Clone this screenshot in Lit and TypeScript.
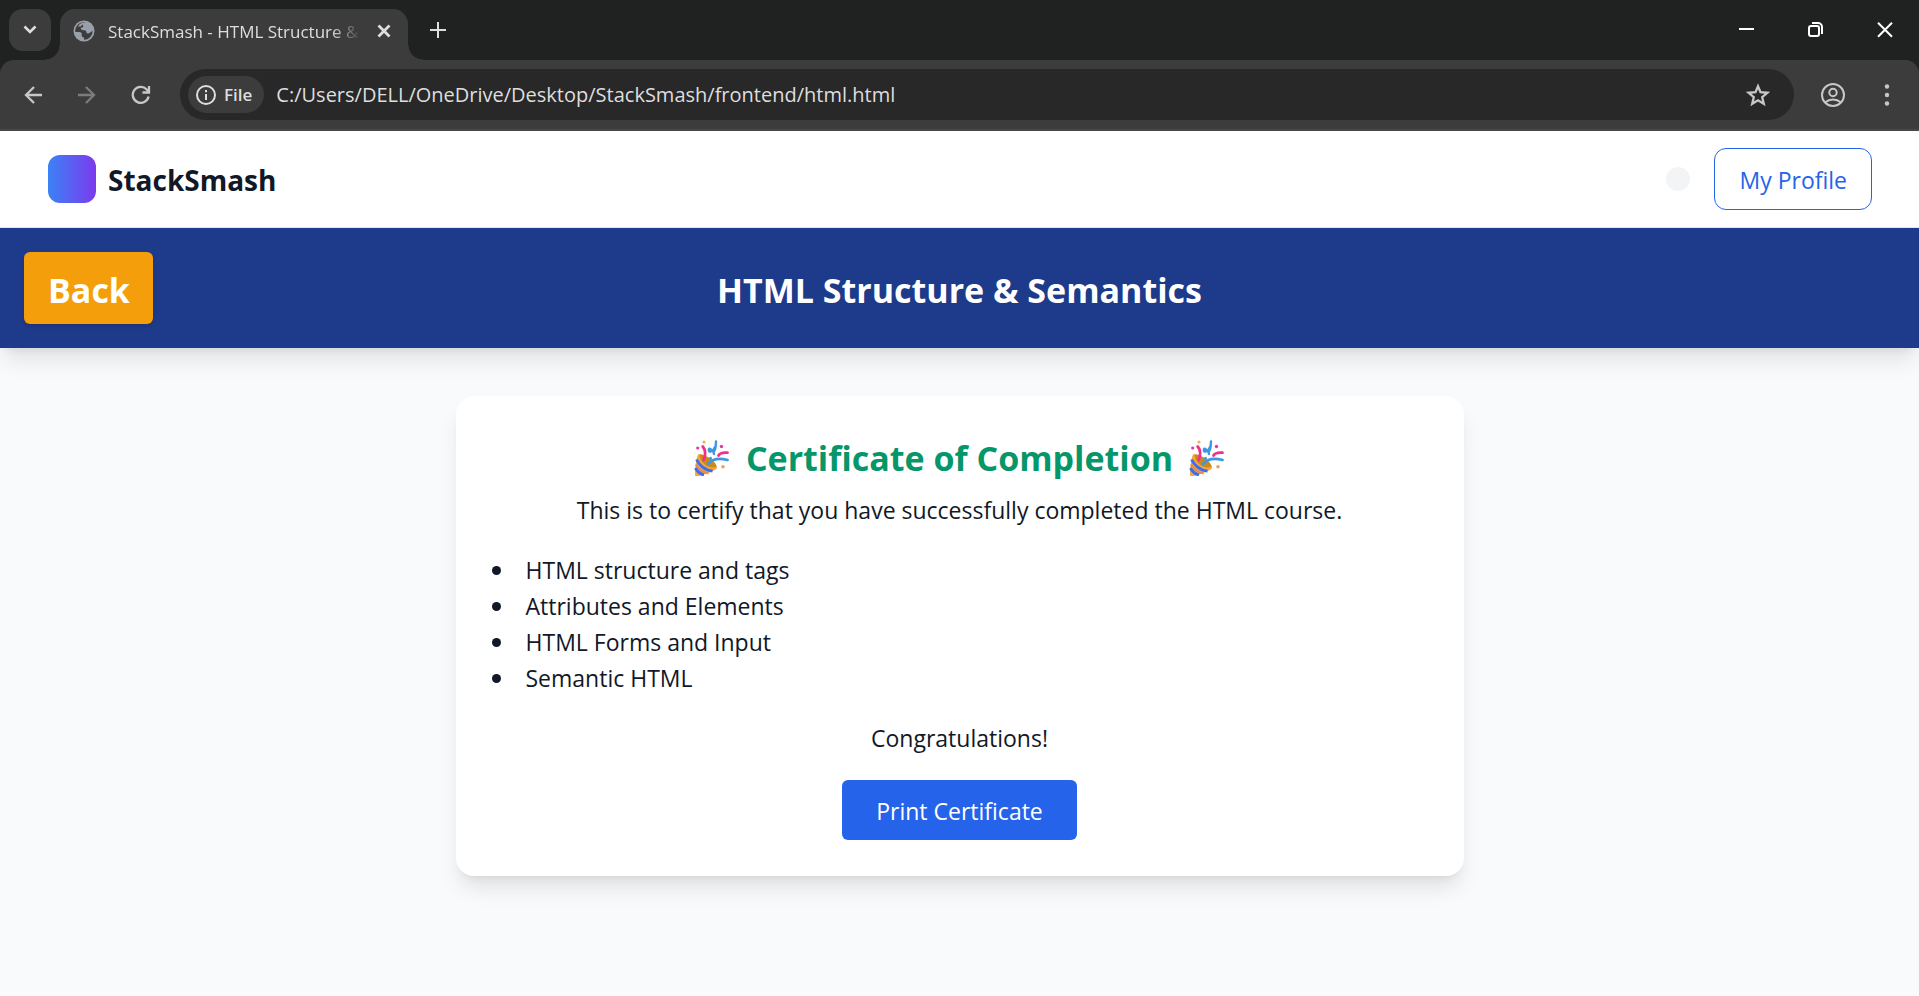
import { LitElement, html, css, svg } from "lit";
import { customElement } from "lit/decorators.js";

@customElement("browser-chrome")
export class BrowserChrome extends LitElement {
  static styles = css`
    :host {
      display: block;
      background: #202221;
      color: #dededf;
      font-family: "Open Sans", sans-serif;
    }
    * {
      box-sizing: border-box;
    }
    button {
      display: grid;
      place-items: center;
      padding: 0;
      border: 0;
      background: none;
      color: inherit;
      font: inherit;
    }
    svg {
      display: block;
      fill: none;
      stroke: currentColor;
      stroke-width: 2;
    }
    .strip {
      display: flex;
      height: 60px;
      padding-left: 9px;
      align-items: flex-end;
    }
    .search {
      width: 42px;
      height: 42px;
      margin: 0 9px 9px 0;
      border-radius: 14px;
      background: #3c3c3c;
    }
    .tab {
      position: relative;
      display: flex;
      align-items: center;
      width: 348px;
      height: 51px;
      padding: 0 9px 8px 13px;
      border-radius: 15px 15px 0 0;
      background: #3c3c3c;
    }
    .tab::before,
    .tab::after {
      content: "";
      position: absolute;
      bottom: 0;
      width: 15px;
      height: 15px;
    }
    .tab::before {
      right: 100%;
      background: radial-gradient(circle at 0 0, transparent 14px, #3c3c3c 15px);
    }
    .tab::after {
      left: 100%;
      background: radial-gradient(circle at 100% 0, transparent 14px, #3c3c3c 15px);
    }
    .name {
      flex: 1;
      min-width: 0;
      margin-left: 13px;
      padding-top: 3px;
      overflow: hidden;
      white-space: nowrap;
      font-size: 17px;
      line-height: 24px;
      mask-image: linear-gradient(to right, #000 calc(100% - 30px), transparent);
    }
    .close {
      width: 30px;
      height: 30px;
      margin-left: 8px;
    }
    .add {
      width: 42px;
      height: 42px;
      margin: 0 auto 9px 9px;
    }
    .window {
      width: 69px;
      height: 60px;
      color: #fff;
    }
    .bar {
      display: flex;
      align-items: center;
      height: 71px;
      padding: 0 11px 0 12px;
      border-bottom: 2px solid #474747;
      border-radius: 14px 14px 0 0;
      background: #3c3c3c;
    }
    .tool {
      width: 42px;
      height: 42px;
      margin-right: 12px;
      color: #c7c7c7;
    }
    .dim {
      color: #7c7c7c;
    }
    .omnibox {
      display: flex;
      flex: 1;
      align-items: center;
      height: 51px;
      margin: 0 18px 0 6px;
      padding: 0 15px 0 8px;
      border-radius: 26px;
      background: #282828;
    }
    .chip {
      display: flex;
      align-items: center;
      gap: 8px;
      height: 37px;
      padding: 0 12px 0 8px;
      border-radius: 19px;
      background: #3c3c3c;
      font-size: 17px;
      font-weight: 600;
    }
    .url {
      flex: 1;
      min-width: 0;
      margin-left: 12px;
      padding: 0;
      border: 0;
      outline: 0;
      background: none;
      color: #dededf;
      font: 20px/30px "Open Sans", sans-serif;
    }
    .star {
      width: 42px;
      height: 42px;
      color: #c7c7c7;
    }
    .last {
      margin-right: 0;
    }
  `;

  render() {
    return html`
      <div class="strip">
        <button class="search" aria-label="Search tabs">
          <svg width="14" height="10" viewBox="0 0 14 10"><path stroke-width="2.6" d="M1.500 1.500 7 7l5.500-5.500" /></svg>
        </button>
        <div class="tab">
          <svg width="22" height="22" viewBox="0 0 22 22">
            <circle cx="11" cy="11" r="10.500" fill="#9aa0a9" stroke="none" />
            <path fill="#3c3c3c" stroke="none" d="M12.500 2.200c-1 .6-2.200 1.300-2.500 2.300-.2 1 .5 1.500.2 2.300-.4.800-2 .6-2.400 1.500-.3.800.6 1.400 1.400 1.700 1.300.4 3 .1 3.800 1 .6.700.2 1.600 1 2.200.9.500 1.900.1 2.700-.3 1-.6 2-1.600 3-1.800a8.800 8.800 0 0 1-8.700 8.700v-2.300c-1.300 0-2.200-.7-2.300-2-.1-.9.300-2-.4-2.700-1-.9-3.500-.7-6-.8A8.800 8.800 0 0 1 12.500 2.200Z" />
            <path fill="#9aa0a9" stroke="none" d="M12 2c-3 .2-6 2-7.500 5 1.500-1 2.500-.6 3-.2C8 5 11 4.500 12 2Z" />
          </svg>
          <span class="name">StackSmash - HTML Structure &amp; Semantics</span>
          <button class="close" aria-label="Close tab">
            <svg width="14" height="14" viewBox="0 0 14 14"><path stroke-width="2.8" d="m1.500 1.500 11 11m0-11-11 11" /></svg>
          </button>
        </div>
        <button class="add" aria-label="New tab">
          <svg width="16" height="16" viewBox="0 0 16 16"><path d="M8 0v16M0 8h16" /></svg>
        </button>
        <button class="window" aria-label="Minimize">
          <svg width="17" height="16" viewBox="0 0 17 16"><path d="M1 7h15" /></svg>
        </button>
        <button class="window" aria-label="Restore">
          <svg width="17" height="16" viewBox="0 0 17 16"><rect x="2" y="4" width="10" height="10" rx="2" /><path d="M5 1h6a4 4 0 0 1 4 4v7" /></svg>
        </button>
        <button class="window" aria-label="Close">
          <svg width="17" height="16" viewBox="0 0 17 16"><path d="m2 .8 14 14m0-14-14 14" /></svg>
        </button>
      </div>
      <div class="bar">
        <button class="tool" aria-label="Back">
          <svg width="18" height="18" viewBox="0 0 18 18"><path stroke-width="2.300" d="M18 9H2m8-8L2 9l8 8" /></svg>
        </button>
        <button class="tool dim" aria-label="Forward">
          <svg width="18" height="18" viewBox="0 0 18 18"><path stroke-width="2.300" d="M0 9h16M8 1l8 8-8 8" /></svg>
        </button>
        <button class="tool" aria-label="Reload">
          <svg width="20" height="20" viewBox="0 0 20 20"><path stroke-width="2.300" d="M17.600 11.500A8 8 0 1 1 15.700 4.400L18 7M18 1v6.500h-6.500" /></svg>
        </button>
        <div class="omnibox">
          <button class="chip">
            <svg width="20" height="20" viewBox="0 0 20 20"><circle cx="10" cy="10" r="9" /><path d="M10 9v6M10 5v2.200" /></svg>
            <span>File</span>
          </button>
          <input class="url" aria-label="Address" value="C:/Users/DELL/OneDrive/Desktop/StackSmash/frontend/html.html" />
          <button class="star" aria-label="Bookmark">
            <svg width="24" height="24" viewBox="0 0 24 24"><path stroke-width="2.300" d="m12 3.300 2.500 5.900 6.900.6-5.200 4.400 1.600 6.600L12 17.300l-5.800 3.500 1.600-6.600-5.200-4.400 6.900-.6Z" /></svg>
          </button>
        </div>
        <button class="tool" aria-label="Profile">
          <svg width="24" height="24" viewBox="0 0 24 24"><circle cx="12" cy="12" r="11" /><circle cx="12" cy="9.500" r="3.700" /><path d="M4 19.500c4.800-4 11.200-4 16 0" /></svg>
        </button>
        <button class="tool last" aria-label="Menu">
          <svg width="6" height="24" viewBox="0 0 6 24"><g fill="currentColor" stroke="none"><circle cx="3" cy="3.500" r="2.200" /><circle cx="3" cy="12" r="2.200" /><circle cx="3" cy="20.500" r="2.200" /></g></svg>
        </button>
      </div>
    `;
  }
}

const popper = () => html`
  <svg class="popper" viewBox="0 0 36 36" role="img" aria-label="Party popper">
    ${svg`
      <path fill="#c98a1b" d="M4 15c3-4 21 7 18.500 13.500L8 30Z" />
      <path fill="#f3a73c" d="M4 14.500C2 19 1 27 1 35c0 1 1 1.500 2 1.300 7-1.500 14-4 18.500-6.800 1-.7 1.200-1.800.8-2.700C15 30 5 22 5.600 14Z" />
      <path fill="none" stroke="#3f6df0" stroke-width="3" d="M2.600 19.500C5 25 11 30.500 18.500 31M1.500 28c1.500 3 4.500 6 8.500 7" />
      <path fill="none" stroke="#e58a55" stroke-width="2" d="M2 24.500c2 4 7.500 8.500 12.500 9" />
      <g fill="none" stroke-linecap="round" stroke-width="2.800">
        <path stroke="#f0318c" d="M8.700 6.500c3 3.500 3 8.500 1 13.500M24.500 15.500c1.500-2.500 5-3.200 9-2.800" />
        <path stroke="#3c98e0" d="M14 24c4.500-5.500 12-6 19.500-4" />
        <path stroke="#3c98e0" stroke-width="2.400" d="M22 1.500c-.2 7-1.500 12-4 9.500-1-2-3-3.500-3.200-1-.2 2.500 3.200 2 4.700-.5 0 2 0 3.500.5 4.500" />
      </g>
      <circle cx="10" cy="2" r="1.600" fill="#efb63f" />
      <circle cx="3.700" cy="8" r="1.600" fill="#e43aa0" />
      <circle cx="27.500" cy="6.500" r="1.700" fill="#e43aa0" />
      <circle cx="16.500" cy="18.300" r="1.500" fill="#3c98e0" />
      <circle cx="29" cy="26.800" r="1.800" fill="#f0a050" />
    `}
  </svg>
`;

@customElement("app-root")
export class AppRoot extends LitElement {
  static styles = css`
    :host {
      display: flex;
      flex-direction: column;
      min-height: 100vh;
      background: #f9fafb;
      color: #111827;
      font: 23px/36px "Open Sans", sans-serif;
    }
    * {
      box-sizing: border-box;
    }
    button {
      border: 0;
      font: inherit;
    }
    .site {
      display: flex;
      align-items: center;
      height: 97px;
      padding: 0 47px 0 48px;
      border-bottom: 1px solid #e5e7eb;
      background: #fff;
    }
    .logo {
      width: 48px;
      height: 48px;
      margin-right: 12px;
      border-radius: 12px;
      background: linear-gradient(to right, #3b82f6, #7c3aed);
    }
    .brand {
      margin-right: auto;
      padding-top: 2px;
      font-size: 28px;
      font-weight: 700;
    }
    .toggle {
      width: 24px;
      height: 24px;
      margin-right: 24px;
      padding: 0;
      border-radius: 50%;
      background: #f3f4f6;
    }
    .profile {
      padding: 13px 24px 11px;
      border: 1px solid #2563eb;
      border-radius: 12px;
      color: #2563eb;
      text-decoration: none;
    }
    .course {
      display: grid;
      grid-template-columns: 1fr auto 1fr;
      align-items: center;
      padding: 24px;
      background: #1e3a8a;
      color: #fff;
      box-shadow: 0 15px 22px -4px rgb(0 0 0 / 0.1), 0 6px 9px -6px rgb(0 0 0 / 0.1);
    }
    .back {
      justify-self: start;
      padding: 14px 23px 10px 24px;
      border-radius: 6px;
      background: #f59e0b;
      color: #fff;
      font-size: 34px;
      font-weight: 700;
      line-height: 48px;
      box-shadow: 0 2px 4px rgb(0 0 0 / 0.15);
    }
    h1,
    h2 {
      margin: 0;
      padding-top: 4px;
      font-size: 34px;
      font-weight: 700;
      line-height: 44px;
    }
    .card {
      width: 100%;
      max-width: 1008px;
      margin: 48px auto;
      padding: 36px;
      border-radius: 18px;
      background: #fff;
      text-align: center;
      box-shadow: 0 15px 22px -4px rgb(0 0 0 / 0.1), 0 6px 9px -6px rgb(0 0 0 / 0.1);
    }
    h2 {
      display: flex;
      align-items: center;
      justify-content: center;
      gap: 16px;
      margin-bottom: 12px;
      color: #059669;
    }
    .popper {
      width: 36px;
      height: 36px;
    }
    p {
      margin: 0;
    }
    ul {
      margin: 24px 0;
      padding: 0;
      list-style: none;
      text-align: left;
    }
    li {
      display: flex;
      align-items: center;
      gap: 25px;
    }
    li::before {
      content: "";
      width: 9px;
      height: 9px;
      border-radius: 50%;
      background: #111827;
    }
    .print {
      margin-top: 24px;
      padding: 13px 34px 11px;
      border-radius: 6px;
      background: #2563eb;
      color: #fff;
      vertical-align: top;
    }
  `;

  private topics = ["HTML structure and tags", "Attributes and Elements", "HTML Forms and Input", "Semantic HTML"];

  render() {
    return html`
      <browser-chrome></browser-chrome>
      <header class="site">
        <span class="logo"></span>
        <span class="brand">StackSmash</span>
        <button class="toggle" aria-label="Toggle theme"></button>
        <a class="profile" href="#profile">My Profile</a>
      </header>
      <div class="course">
        <button class="back">Back</button>
        <h1>HTML Structure &amp; Semantics</h1>
      </div>
      <main class="card">
        <h2>${popper()}<span>Certificate of Completion</span>${popper()}</h2>
        <p>This is to certify that you have successfully completed the HTML course.</p>
        <ul>
          ${this.topics.map((topic) => html`<li>${topic}</li>`)}
        </ul>
        <p>Congratulations!</p>
        <button class="print">Print Certificate</button>
      </main>
    `;
  }
}
